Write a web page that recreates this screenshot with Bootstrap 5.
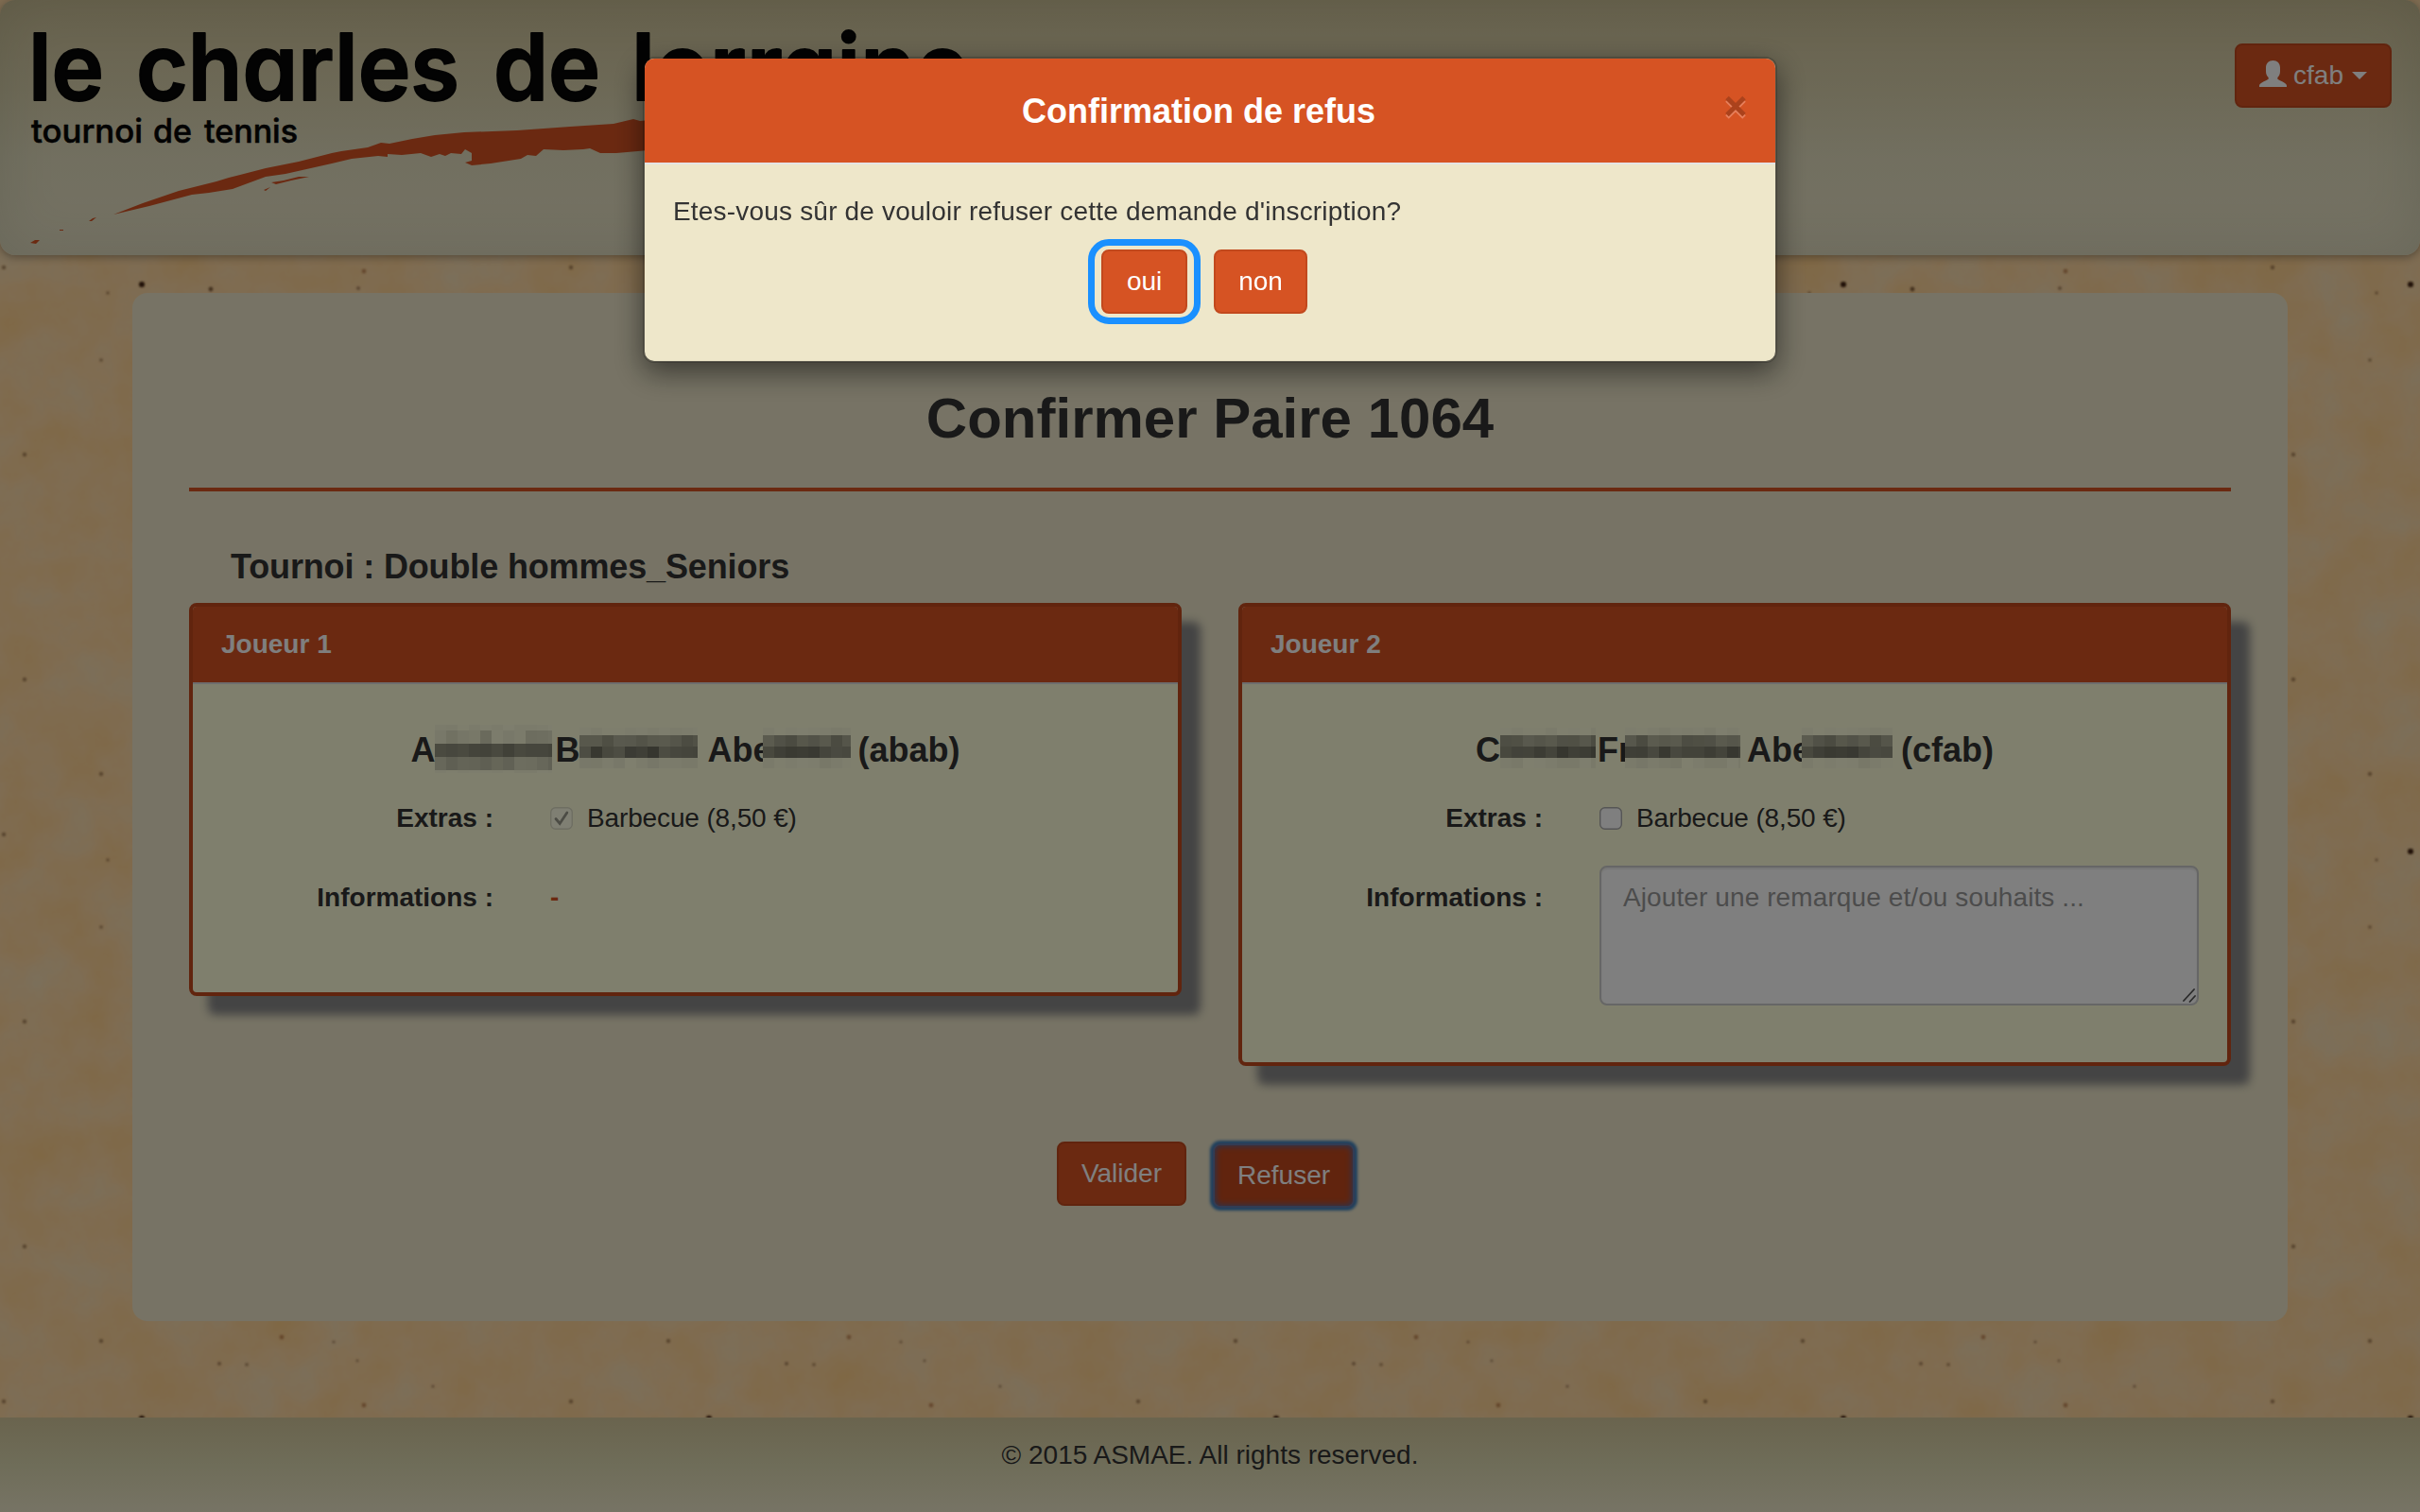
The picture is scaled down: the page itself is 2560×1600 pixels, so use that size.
<!DOCTYPE html>
<html lang="fr">
<head>
<meta charset="utf-8">
<title>Le Charles de Lorraine</title>
<link href="https://cdn.jsdelivr.net/npm/bootstrap@5.3.0/dist/css/bootstrap.min.css" rel="stylesheet">
<style>
:root{--brand:#d65323;--brand-edge:#c2491d;--cream:#eee7ca}
html,body{height:1600px;overflow:hidden}
body{font-family:"Liberation Sans",Arial,sans-serif;font-size:28px;line-height:40px;color:#333;background:#ffd6a2}
.paper{position:absolute;inset:0;z-index:-1}
.topbar{height:270px;border-radius:16px;padding:0;background:linear-gradient(#d0c49b 0,#dad2ad 35%,#e4dfc0 62%,#eae4c8 100%);box-shadow:inset 0 0 60px rgba(60,80,50,.13),0 2px 10px rgba(0,0,0,.35)}
.user-btn{margin:46px 30px 0 0}
.btn-brand{--bs-btn-color:#fff;--bs-btn-bg:var(--brand);--bs-btn-border-color:var(--brand-edge);--bs-btn-hover-color:#fff;--bs-btn-hover-bg:#c0461b;--bs-btn-border-width:2px;font-size:28px;line-height:40px;padding:12px 24px;border-radius:8px;height:68px}
.user-btn .who{margin:0 9px 0 7px}
.sheet{margin:40px 140px 0;padding:100px 60px 0;height:1088px;border-radius:16px;background:var(--cream)}
.sheet h1{font-size:60px;line-height:66px;font-weight:700;margin:0}
.rule{height:4px;background:var(--brand);margin:40px 0 60px}
.sheet h3{font-size:36px;line-height:40px;font-weight:700;margin:0 0 18px 44px;letter-spacing:-.14px}
.players{gap:60px}
.player{flex:1 1 0;border:4px solid var(--brand-edge);border-radius:8px;background:#ffffdb;box-shadow:20px 20px 10px #888;color:#333}
.player .card-header{background:var(--brand);color:#fff;font-weight:700;padding:20px 30px;border-bottom:2px solid #ddd;border-radius:4px 4px 0 0}
.player .card-body{padding:50px 0 60px}
.player h4{font-size:36px;line-height:40px;font-weight:700;margin:0 0 32px;height:40px;white-space:nowrap}
.player h4 svg{flex:none;height:60px;margin-top:-16px}
.player h4 .over-e{margin-left:-10px}
.player h4 .over-r{margin-left:-7px}
.field-label{width:318px;text-align:right;font-weight:700;flex:none}
.field-row{gap:60px;padding-right:30px}
.info-row{min-height:74px;margin-top:30px}
.info-row .field-label,.info-row .dash{padding-top:14px}
.dash{color:var(--brand);font-weight:700}
.extra{letter-spacing:-.14px}
.tick{width:24px;height:24px;margin:8px 15px 0 0;flex:none}
.remark{font-size:28px;line-height:40px;height:148px;padding:12px 23px;border:2px solid #ccc;border-radius:8px;resize:none;box-shadow:inset 0 2px 2px rgba(0,0,0,.075);display:block;letter-spacing:.1px}
.remark::placeholder{color:#999}
.grip{position:absolute;right:3px;bottom:3px}
.actions{gap:28px;padding-right:12px}
.sheet .actions{margin-top:80px;padding-right:9px}
.btn-focus{background:#c2491d;margin-top:2px;border:2px solid #6479a8;box-shadow:inset 0 0 6px 1px #5468a0,0 0 3px 3px #407fba}
.foot{margin-top:102px;height:100px;padding-top:20px;background:linear-gradient(#d4c89c,#dedab2 50%,#eee8ca)}
.modal-backdrop.show{opacity:.5}
.modal-dialog{width:1200px;max-width:none;margin:60px auto}
.modal-content{border:2px solid rgba(0,0,0,.2);background-color:var(--cream);background-clip:padding-box;border-radius:12px;box-shadow:0 10px 30px rgba(0,0,0,.5);color:#333}
.modal-header{background:var(--brand);border-bottom:2px solid #e5e5e5;border-radius:10px 10px 0 0;padding:0 30px;height:112px;align-items:flex-start}
.modal-title{font-size:36px;line-height:40px;font-weight:700;color:#fff;padding-top:36px}
.dismiss{width:24px;height:26px;margin-top:38px;border:0;background:none;padding:0;display:block}
.modal-body{padding:30px;height:208px}
.question{letter-spacing:.19px}
.oui{min-width:91px;position:relative}
.oui::after{content:"";position:absolute;inset:-13px -16px;border:7px solid #1a90ff;border-radius:22px}
</style>
</head>
<body>
<svg class="paper" width="2560" height="1600" aria-hidden="true">
  <defs>
    <filter id="grain" x="0" y="0" width="100%" height="100%" color-interpolation-filters="sRGB">
      <feTurbulence type="fractalNoise" baseFrequency=".016" numOctaves="5" seed="8"/>
      <feColorMatrix values="-.08 0 0 0 1.04  .07 0 0 0 .81  .2 0 0 0 .53  0 0 0 0 1"/>
    </filter>
    <filter id="soft"><feGaussianBlur stdDeviation="1"/></filter>
    <pattern id="specks" width="600" height="600" patternUnits="userSpaceOnUse">
      <g fill="#7d5835" fill-opacity=".6" filter="url(#soft)">
        <circle cx="150" cy="301" r="3" fill="#40200a" fill-opacity="1"/><circle cx="26" cy="119" r="2.200"/><circle cx="107" cy="219" r="2.200"/>
        <circle cx="298" cy="215" r="2.400" fill="#a8632f"/><circle cx="232" cy="243" r="2"/><circle cx="261" cy="244" r="1.800"/>
        <circle cx="353" cy="220" r="1.500"/><circle cx="378" cy="240" r="1.400"/><circle cx="4" cy="283" r="2.200"/>
        <circle cx="385" cy="287" r="2.400" fill="#a8632f"/><circle cx="458" cy="267" r="1.600"/><circle cx="223" cy="306" r="2.400" fill-opacity=".9"/>
        <circle cx="379" cy="305" r="2"/><circle cx="114" cy="310" r="1.700"/><circle cx="26" cy="481" r="2.200"/><circle cx="107" cy="381" r="1.800"/>
      </g>
    </pattern>
  </defs>
  <rect width="2560" height="1600" filter="url(#grain)"/>
  <rect width="2560" height="1600" fill="url(#specks)"/>
</svg>

<nav class="topbar d-flex justify-content-between align-items-start">
  <svg width="1100" height="270" viewBox="0 0 1100 270" font-family="Inter, sans-serif" fill="#060606" stroke="#060606" stroke-linejoin="round">
    <g font-size="97" font-weight="600" stroke-width="1.800" style="font-feature-settings:'cv11' 1,'ss03' 1">
      <text x="30" y="106" textLength="80" lengthAdjust="spacingAndGlyphs">le</text>
      <text x="144" y="106" textLength="342" lengthAdjust="spacingAndGlyphs">charles</text>
      <text x="522" y="106" textLength="113" lengthAdjust="spacingAndGlyphs">de</text>
      <text x="668" y="106" textLength="357" lengthAdjust="spacingAndGlyphs">lorraine</text>
    </g>
    <g font-size="35" font-weight="500" stroke-width=".6" style="font-feature-settings:'cv11' 1">
      <text x="33" y="151" textLength="118" lengthAdjust="spacingAndGlyphs">tournoi</text>
      <text x="162" y="151" textLength="41" lengthAdjust="spacingAndGlyphs">de</text>
      <text x="216" y="151" textLength="99" lengthAdjust="spacingAndGlyphs">tennis</text>
    </g>
    <g fill="#d65323" stroke="none">
      <path d="M120 227L151 215 189 202 229 192 242 188 281 178 316 171 351 162 361 160 389 156 403 151 412 152 436 147 460 143 491 140 547 138 603 134 649 131 670 126 677 128 720 124V156L652 162 635 162 624 157 617 158 596 159 575 158 567 165 558 164 551 168 519 173 499 175 492 172 499 170 499 162 492 158 488 163 477 162 471 165 465 163 456 166 445 162 425 164 410 163 410 166 400 165 372 168 351 173 302 184 281 187 246 200 221 204 203 206 158 218Z"/>
      <path d="M287 193L300 191 316 187 327 187 308 191 292 195ZM279 201L286 198 281 202ZM94 234L98 231 102 230 97 234ZM32 257L37 254 42 254 38 258ZM63 243h4v1h-4z"/>
    </g>
  </svg>
  <button class="btn btn-brand user-btn d-flex align-items-center" type="button">
    <svg width="29" height="28" viewBox="0 0 29 28" fill="#fff" style="margin-top:-4px"><path d="M14.500 0C10 0 7 3 7 7.500V11.500C7 14.500 8 16.500 9.700 18V19.500C9 21 .4 23.200 0 26.500V28H29V26.500C28.600 23.200 20 21 19.300 19.500V18C21 16.500 22 14.500 22 11.500V7.500C22 3 19 0 14.500 0Z"/></svg>
    <span class="who">cfab</span>
    <svg width="16" height="8" viewBox="0 0 16 8" fill="#fff"><path d="M0 0H16L8 8Z"/></svg>
  </button>
</nav>

<main class="sheet">
  <h1 class="text-center">Confirmer Paire 1064</h1>
  <div class="rule"></div>
  <h3>Tournoi : Double hommes_Seniors</h3>
  <div class="players d-flex align-items-start">
    <section class="card player">
      <div class="card-header">Joueur 1</div>
      <div class="card-body">
        <h4 class="d-flex justify-content-center">A<svg class="mosaic" data-seed="3" data-w="124" data-top="14" width="127"></svg>B<svg class="mosaic" data-seed="9" data-w="125" data-top="17" width="135"></svg>Abe<svg class="mosaic over-e" data-seed="5" data-w="93" data-top="17" width="101"></svg>(abab)</h4>
        <div class="field-row d-flex">
          <span class="field-label">Extras :</span>
          <span class="d-flex extra"><svg class="tick" viewBox="0 0 24 24"><rect x=".7" y=".7" width="22.600" height="22.600" rx="5" fill="#fff" fill-opacity=".35" stroke="#dcdcc4" stroke-width="1.400"/><path d="M6 12.500L10.200 17.500 17.800 6" fill="none" stroke="#99998a" stroke-width="2.800" stroke-linecap="round"/></svg>Barbecue (8,50 €)</span>
        </div>
        <div class="field-row info-row d-flex">
          <span class="field-label">Informations :</span>
          <span class="dash">-</span>
        </div>
      </div>
    </section>
    <section class="card player">
      <div class="card-header">Joueur 2</div>
      <div class="card-body">
        <h4 class="d-flex justify-content-center">C<svg class="mosaic" data-seed="14" data-w="101" data-top="17" width="103"></svg>Fr<svg class="mosaic over-r" data-seed="6" data-w="122" data-top="17" width="129"></svg>Abe<svg class="mosaic over-e" data-seed="5" data-w="96" data-top="17" width="105"></svg>(cfab)</h4>
        <div class="field-row d-flex">
          <span class="field-label">Extras :</span>
          <span class="d-flex extra"><svg class="tick" viewBox="0 0 24 24"><rect x=".7" y=".7" width="22.600" height="22.600" rx="5" fill="#fff" stroke="#aaa" stroke-width="1.400"/></svg>Barbecue (8,50 €)</span>
        </div>
        <div class="field-row info-row d-flex">
          <span class="field-label">Informations :</span>
          <div class="flex-grow-1 position-relative">
            <textarea class="form-control remark" placeholder="Ajouter une remarque et/ou souhaits ..."></textarea>
            <svg class="grip" width="14" height="15" viewBox="0 0 14 15" stroke="#555" stroke-width="1.800" stroke-linecap="round"><path d="M1 13L12 1M7.500 14L13 8"/></svg>
          </div>
        </div>
      </div>
    </section>
  </div>
  <div class="actions d-flex justify-content-center">
    <button class="btn btn-brand" type="button">Valider</button>
    <button class="btn btn-brand btn-focus" type="button">Refuser</button>
  </div>
</main>

<footer class="foot text-center">© 2015 ASMAE. All rights reserved.</footer>

<div class="modal-backdrop show w-100 h-100"></div>
<div class="modal d-block" tabindex="-1" role="dialog">
  <div class="modal-dialog">
    <div class="modal-content">
      <div class="modal-header">
        <div class="modal-title flex-grow-1 text-center">Confirmation de refus</div>
        <button class="dismiss" type="button" aria-label="Fermer"><svg class="d-block" width="24" height="26" viewBox="0 0 24 26" fill="none" stroke-width="5"><path d="M3 6L21 24M21 6L3 24" stroke="#e77f5c"/><path d="M3 3.500L21 21.500M21 3.500L3 21.500" stroke="#ab421c"/></svg></button>
      </div>
      <div class="modal-body">
        <div class="question">Etes-vous sûr de vouloir refuser cette demande d'inscription?</div>
        <div class="actions d-flex justify-content-center mt-3 pt-1">
          <button class="btn btn-brand oui" type="button">oui</button>
          <button class="btn btn-brand" type="button">non</button>
        </div>
      </div>
    </div>
  </div>
</div>
<script src="https://cdn.jsdelivr.net/npm/bootstrap@5.3.0/dist/js/bootstrap.bundle.min.js"></script>
<script>
// Mosaic blocks that mask the players' names: pale fringe rows, dark middle rows.
document.querySelectorAll('svg.mosaic').forEach(function (s) {
  var seed = +s.dataset.seed, w = +s.dataset.w, y = +s.dataset.top - 5, out = '';
  function rnd() { seed = (seed * 9301 + 49297) % 233280; return seed / 233280; }
  var tall = s.dataset.top === '14';
  var rows = tall ? [[6, 248, 10], [14, 232, 40], [14, 140, 25], [14, 205, 30], [4, 250, 6]] : [[8, 250, 10], [12, 165, 36], [12, 130, 50], [11, 246, 16]];
  rows.forEach(function (r) {
    for (var x = 0; x < w; x += 12) {
      var v = Math.min(255, Math.round(r[1] + (rnd() - .5) * r[2]));
      out += '<rect x="' + x + '" y="' + y + '" width="' + Math.min(12, w - x) + '" height="' + r[0] + '" fill="rgb(' + v + ',' + v + ',' + Math.round(v * .87) + ')"/>';
    }
    y += r[0];
  });
  s.setAttribute('shape-rendering', 'crispEdges');
  s.innerHTML = out;
});
</script>
</body>
</html>
